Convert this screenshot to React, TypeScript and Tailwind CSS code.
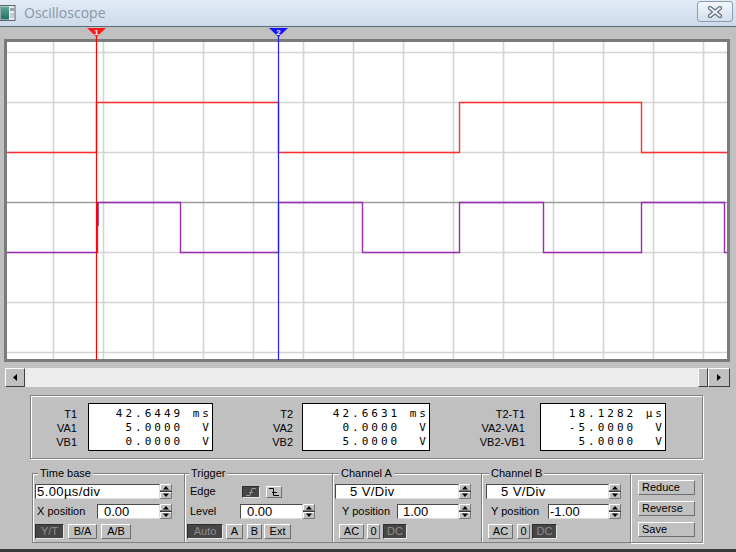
import React from 'react';

type P = { children?: React.ReactNode; className?: string };

// grid positions inside the white plot area (720 x 317)
const gridX = Array.from({ length: 14 }, (_, i) => 46 + i * 50);
const gridY = [10, 60, 110, 160, 210, 260, 310];

const chA = 'M0 110.5 H89.5 V60.5 H271.5 V110.5 H452.5 V60.5 H634.5 V110.5 H720';
const chB =
  'M0 210.5 H90.5 V160.5 H173.5 V210.5 H271.5 V160.5 H355.5 V210.5 H452.5 V160.5 H536.5 V210.5 H634.5 V160.5 H717.5 V210.5 H720';

function Spin() {
  return (
    <svg width="12" height="15" viewBox="0 0 12 15" className="block shrink-0">
      <rect x="0" y="0" width="12" height="15" fill="#c0c0c0" />
      <path d="M0.5 7V0.5H11" stroke="#fff" fill="none" />
      <path d="M0 6.5H11.5V0" stroke="#7a7a7a" fill="none" />
      <path d="M0.5 15V8.5H11" stroke="#fff" fill="none" />
      <path d="M0 14.5H11.5V8" stroke="#7a7a7a" fill="none" />
      <path d="M0 7.5H12" stroke="#3a3a3a" />
      <path d="M3 5.5L9 5.5L6 2Z" fill="#000" />
      <path d="M3 9.5L9 9.5L6 13Z" fill="#000" />
    </svg>
  );
}

function Inp({ className = '', children }: P) {
  return (
    <div className="flex shrink-0">
      <div
        className={
          'h-[15px] bg-white border border-t-[#4a4a4a] border-l-[#4a4a4a] border-r-[#dcdcdc] border-b-[#dcdcdc] flex items-center whitespace-pre text-[13px] leading-none ' +
          className
        }
      >
        {children}
      </div>
      <Spin />
    </div>
  );
}

function Btn({ className = '', children, dark = false, left = false }: P & { dark?: boolean; left?: boolean }) {
  const look = dark
    ? 'bg-[#464646] text-[#8f8f8f] border-t-[#2e2e2e] border-l-[#2e2e2e] border-r-[#e6e6e6] border-b-[#e6e6e6] '
    : 'bg-[#c0c0c0] text-black border-t-white border-l-white border-r-[#6e6e6e] border-b-[#6e6e6e] ';
  return (
    <div
      className={
        'h-[15px] flex items-center border text-[11px] leading-none shrink-0 ' +
        (left ? 'justify-start pl-[3px] ' : 'justify-center ') +
        look +
        className
      }
    >
      {children}
    </div>
  );
}

function Readout({ labels, rows, labelCls, boxCls }: { labels: string[]; rows: string[]; labelCls: string; boxCls: string }) {
  return (
    <>
      <div className={'flex flex-col items-end pt-[4px] text-[11px] leading-[14px] shrink-0 ' + labelCls}>
        {labels.map((l) => (
          <span key={l}>{l}</span>
        ))}
      </div>
      <div
        className={
          "h-[48px] bg-white border border-black pt-[3px] flex flex-col items-end shrink-0 font-['DejaVu_Sans_Mono',monospace] text-[11px] leading-[14px] tracking-[3px] whitespace-pre " +
          boxCls
        }
      >
        {rows.map((r) => (
          <span key={r}>{r}</span>
        ))}
      </div>
    </>
  );
}

const fs =
  'h-[76px] min-w-0 shrink-0 border-t border-b border-[#808080] shadow-[inset_1px_1px_0_#ffffff] ';

export default function App() {
  return (
    <div className="w-[736px] h-[552px] bg-[#c0c0c0] flex flex-col overflow-hidden font-['Liberation_Sans',sans-serif] text-black">
      {/* title bar */}
      <div className="h-[27px] shrink-0 flex items-start bg-linear-to-b from-[#e3ecf6] to-[#ccdaeb] border-b border-[#5b6b7c]">
        <svg width="16" height="16" viewBox="0 0 16 16" className="mt-[5px] shrink-0">
          <defs>
            <linearGradient id="ic" x1="0" y1="0" x2="0" y2="1">
              <stop offset="0" stopColor="#5cae95" />
              <stop offset="1" stopColor="#1f6f63" />
            </linearGradient>
          </defs>
          <rect x="0" y="0.5" width="15" height="15" fill="#e9ecef" stroke="#5a6470" />
          <rect x="1" y="1.5" width="8" height="13" fill="url(#ic)" />
          <rect x="10" y="3" width="4" height="3" fill="#9aa3ad" />
          <rect x="10" y="8" width="4" height="5" fill="#c6ccd3" />
        </svg>
        <span className="ml-[8px] mt-[3px] text-[14px] leading-[19px] text-[#8795a4] font-['Open_Sans',sans-serif]">
          Oscilloscope
        </span>
        <div className="ml-auto mr-[3px] mt-[1px] w-[36px] h-[21px] rounded-[3px] border border-[#8d9db1] bg-linear-to-b from-[#f4f7fb] to-[#d3dfed] flex items-center justify-center">
          <svg width="16" height="12" viewBox="0 0 16 12">
            <path d="M3 2L13 10M13 2L3 10" stroke="#5f6c7a" strokeWidth="4.2" strokeLinecap="round" />
            <path d="M3 2L13 10M13 2L3 10" stroke="#eef2f7" strokeWidth="2" strokeLinecap="round" />
          </svg>
        </div>
      </div>

      {/* cursor strip + screen */}
      <div className="relative h-[335px] shrink-0 flex flex-col">
        <div className="h-[12px] shrink-0" />
        <div className="ml-[4px] w-[726px] h-[323px] border-[3px] border-[#7b7b7b] bg-white">
          <svg width="720" height="317" viewBox="0 0 720 317" className="block">
            {gridX.map((x) => (
              <line key={'v' + x} x1={x + 0.5} y1="0" x2={x + 0.5} y2="317" stroke="#d4d4d4" strokeWidth="1.6" />
            ))}
            {gridY.map((y) => (
              <line
                key={'h' + y}
                x1="0"
                y1={y + 0.5}
                x2="720"
                y2={y + 0.5}
                stroke={y === 160 ? '#9c9c9c' : '#d4d4d4'}
                strokeWidth="1.6"
              />
            ))}
            <path d={chA} fill="none" stroke="#ff3030" strokeWidth="1.4" />
            <path d={chB} fill="none" stroke="#9b2eb0" strokeWidth="1.4" />
            <path d="M91 160.5V184" stroke="#7a2090" strokeWidth="1.4" />
          </svg>
        </div>
        <svg width="736" height="335" viewBox="0 0 736 335" className="absolute left-0 top-0 pointer-events-none">
          <line x1="96.5" y1="8" x2="96.5" y2="333" stroke="#ff0000" strokeWidth="1.2" />
          <line x1="278.5" y1="8" x2="278.5" y2="333" stroke="#2020ff" strokeWidth="1.2" />
          <polygon points="87,1 106,1 96.5,10" fill="#ff1616" />
          <polygon points="269,1 288,1 278.5,10" fill="#1212ff" />
          <text x="96.5" y="7.5" fontSize="8" fontWeight="bold" fill="#fff" textAnchor="middle" fontFamily="Liberation Sans">
            1
          </text>
          <text x="278.5" y="7.5" fontSize="8" fontWeight="bold" fill="#fff" textAnchor="middle" fontFamily="Liberation Sans">
            2
          </text>
        </svg>
      </div>

      {/* scrollbar */}
      <div className="mt-[6px] ml-[5px] w-[725px] h-[19px] shrink-0 flex">
        <div className="w-[20px] h-full bg-[#c0c0c0] border border-t-white border-l-white border-b-[#404040] border-r-[#404040] flex items-center justify-center">
          <svg width="4" height="7" viewBox="0 0 4 7">
            <path d="M4 0V7L0 3.5Z" fill="#000" />
          </svg>
        </div>
        <div className="flex-1 h-full bg-[#ececec]" />
        <div className="w-[10px] h-full bg-[#c0c0c0] border border-t-white border-l-white border-b-[#404040] border-r-[#404040]" />
        <div className="w-[22px] h-full bg-[#c0c0c0] border border-t-white border-l-white border-b-[#404040] border-r-[#404040] flex items-center justify-center">
          <svg width="4" height="7" viewBox="0 0 4 7">
            <path d="M0 0V7L4 3.5Z" fill="#000" />
          </svg>
        </div>
      </div>

      {/* readouts */}
      <div className="mt-[8px] ml-[30px] w-[673px] h-[64px] shrink-0 border border-[#808080] shadow-[inset_1px_1px_0_#ffffff,1px_1px_0_#ffffff] flex items-start pt-[7px]">
        <Readout
          labels={['T1', 'VA1', 'VB1']}
          rows={['42.6449 ms', '5.0000  V', '0.0000  V']}
          labelCls="w-[46px]"
          boxCls="ml-[11px] w-[125px]"
        />
        <Readout
          labels={['T2', 'VA2', 'VB2']}
          rows={['42.6631 ms', '0.0000  V', '5.0000  V']}
          labelCls="w-[80px]"
          boxCls="ml-[9px] w-[128px]"
        />
        <Readout
          labels={['T2-T1', 'VA2-VA1', 'VB2-VB1']}
          rows={['18.1282 µs', '-5.0000  V', '5.0000  V']}
          labelCls="w-[95px]"
          boxCls="ml-[15px] w-[126px]"
        />
      </div>

      {/* controls */}
      <div className="mt-[8px] ml-[32px] flex items-start shrink-0 text-[11px]">
        <fieldset className={fs + 'w-[152px] border-l'}>
          <legend className="ml-[5px] px-[2px] leading-[13px] bg-[#c0c0c0]">Time base</legend>
          <div className="pl-[2px] pt-[4px] flex flex-col gap-[4px]">
            <Inp className="w-[125px] pl-[1px] tracking-[0.4px]">5.00µs/div</Inp>
            <div className="flex items-center">
              <span className="w-[62px] pl-[2px]">X position</span>
              <Inp className="w-[63px] pl-[6px]">0.00</Inp>
            </div>
            <div className="flex gap-[4px]">
              <Btn dark className="w-[29px]">Y/T</Btn>
              <Btn className="w-[29px]">B/A</Btn>
              <Btn className="w-[30px]">A/B</Btn>
            </div>
          </div>
        </fieldset>

        <fieldset className={fs + 'w-[148px] border-l'}>
          <legend className="ml-[4px] px-[2px] leading-[13px] bg-[#c0c0c0]">Trigger</legend>
          <div className="pt-[4px] flex flex-col gap-[4px]">
            <div className="h-[15px] flex items-center pl-[5px]">
              <span className="w-[52px]">Edge</span>
              <div className="w-[18px] h-[12px] bg-[#464646] border border-t-[#2e2e2e] border-l-[#2e2e2e] border-r-[#e6e6e6] border-b-[#e6e6e6] flex items-center justify-center">
                <svg width="10" height="8" viewBox="0 0 10 8">
                  <path d="M0 7.5H4L6 0.5H10" stroke="#9a9a9a" fill="none" />
                  <path d="M3 4.5H7" stroke="#9a9a9a" />
                </svg>
              </div>
              <div className="ml-[6px] w-[16px] h-[12px] bg-[#c0c0c0] border border-t-white border-l-white border-r-[#6e6e6e] border-b-[#6e6e6e] flex items-center justify-center">
                <svg width="10" height="8" viewBox="0 0 10 8">
                  <path d="M0 0.5H4.5V7.5H10" stroke="#000" fill="none" />
                  <path d="M3 4.5H8" stroke="#000" />
                </svg>
              </div>
            </div>
            <div className="flex items-center pl-[5px]">
              <span className="w-[50px]">Level</span>
              <Inp className="w-[63px] pl-[6px]">0.00</Inp>
            </div>
            <div className="flex pl-[2px]">
              <Btn dark className="w-[36px]">Auto</Btn>
              <Btn className="ml-[3px] w-[17px]">A</Btn>
              <Btn className="ml-[4px] w-[15px]">B</Btn>
              <Btn className="ml-[2px] w-[27px]">Ext</Btn>
            </div>
          </div>
        </fieldset>

        <fieldset className={fs + 'w-[149px] border-l'}>
          <legend className="ml-[6px] px-[2px] leading-[13px] bg-[#c0c0c0]">Channel A</legend>
          <div className="pt-[4px] flex flex-col gap-[4px]">
            <div className="pl-[2px]">
              <Inp className="w-[124px] pl-[14px] tracking-[0.4px]">5 V/Div</Inp>
            </div>
            <div className="flex items-center pl-[9px]">
              <span className="w-[55px]">Y position</span>
              <Inp className="w-[62px] pl-[5px]">1.00</Inp>
            </div>
            <div className="flex pl-[6px]">
              <Btn className="w-[25px]">AC</Btn>
              <Btn className="ml-[3px] w-[13px]">0</Btn>
              <Btn dark className="ml-[3px] w-[24px]">DC</Btn>
            </div>
          </div>
        </fieldset>

        <fieldset className={fs + 'w-[149px] border-l'}>
          <legend className="ml-[7px] px-[2px] leading-[13px] bg-[#c0c0c0]">Channel B</legend>
          <div className="pt-[4px] flex flex-col gap-[4px]">
            <div className="pl-[4px]">
              <Inp className="w-[123px] pl-[14px] tracking-[0.4px]">5 V/Div</Inp>
            </div>
            <div className="flex items-center pl-[9px]">
              <span className="w-[57px]">Y position</span>
              <Inp className="w-[61px] pl-[1px]">-1.00</Inp>
            </div>
            <div className="flex pl-[6px]">
              <Btn className="w-[25px]">AC</Btn>
              <Btn className="ml-[4px] w-[13px]">0</Btn>
              <Btn dark className="ml-[2px] w-[25px]">DC</Btn>
            </div>
          </div>
        </fieldset>

        <div className="mt-[6px] w-[73px] h-[70px] shrink-0 border border-[#808080] shadow-[inset_1px_1px_0_#ffffff,1px_1px_0_#ffffff] pl-[7px] pt-[6px] flex flex-col gap-[6px]">
          <Btn left className="w-[57px]">Reduce</Btn>
          <Btn left className="w-[57px]">Reverse</Btn>
          <Btn left className="w-[57px]">Save</Btn>
        </div>
      </div>

      <div className="mt-auto h-[3px] shrink-0 bg-[#3a3a3a]" />
    </div>
  );
}
